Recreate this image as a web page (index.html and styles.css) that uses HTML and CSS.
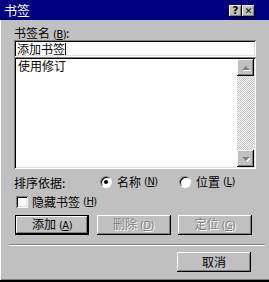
FILE: index.html
```html
<!DOCTYPE html>
<html>
<head>
  <meta charset="UTF-8">
  <title>书签</title>
  <link rel="stylesheet" href="styles.css">
</head>
<body>
  <div class="window">
    <div class="titlebar">
      <span class="title">书签</span>
      <span class="cap-btn">?</span>
      <span class="cap-btn close">✕</span>
    </div>

    <div class="content">
      <div class="label">书签名<span class="key">(<u>B</u>)</span>:</div>
      <div class="field">添加书签<span class="caret"></span></div>

      <div class="list">
        <div class="items">
          <div class="item">使用修订</div>
        </div>
        <div class="scroll">
          <div class="arrow"><i class="up"></i></div>
          <div class="track"></div>
          <div class="arrow"><i class="down"></i></div>
        </div>
      </div>

      <div class="sort">
        <span class="sort-label">排序依据:</span>
        <label class="radio r1"><span class="dot on"></span>名称<span class="key">(<u>N</u>)</span></label>
        <label class="radio r2"><span class="dot"></span>位置<span class="key">(<u>L</u>)</span></label>
      </div>

      <label class="check"><span class="box"></span>隐藏书签<span class="key">(<u>H</u>)</span></label>

      <div class="buttons">
        <button class="btn default">添加<span class="key">(<u>A</u>)</span></button>
        <button class="btn" disabled>删除<span class="key">(<u>D</u>)</span></button>
        <button class="btn" disabled>定位<span class="key">(<u>G</u>)</span></button>
      </div>

      <div class="sep"></div>

      <div class="footer">
        <button class="btn">取消</button>
      </div>
    </div>
  </div>
</body>
</html>
```

FILE: styles.css
```css
* {
  box-sizing: border-box;
}

body {
  margin: 0;
  background: #c0c0c0;
  font-family: "Noto Sans CJK SC", "DejaVu Sans", sans-serif;
  font-size: 12px;
  color: #000;
}

u {
  text-decoration: underline;
  text-underline-offset: 1px;
}

/* mnemonic like (B) - narrow, as in the old bitmap font */
.key {
  margin-left: 3px;
  font-family: "DejaVu Sans Condensed", "DejaVu Sans", sans-serif;
  font-size: 11px;
  letter-spacing: -0.5px;
}

.window {
  width: 269px;
  height: 282px;
  background: #c0c0c0;
  border-bottom: 2px solid #000;
  box-shadow: inset 1px 0 #fff, inset 0 -1px #808080;
}

.titlebar {
  display: flex;
  align-items: center;
  height: 20px;
  padding: 0 14px 0 4px;
  background: #000080;
  color: #fff;
}

.title {
  flex: 1;
  font-size: 13px;
  line-height: 14px;
}

.cap-btn {
  display: flex;
  align-items: center;
  justify-content: center;
  width: 13px;
  height: 12px;
  margin-top: 2px;
  background: #c0c0c0;
  color: #000;
  font-family: "DejaVu Sans", sans-serif;
  font-weight: bold;
  font-size: 10px;
  line-height: 1;
  box-shadow: inset -1px -1px #000, inset 1px 1px #fff, inset -2px -2px #808080;
}

.cap-btn.close {
  font-size: 9px;
}

.content {
  padding: 6px 13px 0 14px;
}

.label {
  height: 14px;
  line-height: 14px;
}

.field {
  display: flex;
  align-items: center;
  height: 17px;
  padding-left: 3px;
  background: #fff;
  line-height: 13px;
  box-shadow: inset 1px 1px #808080, inset -1px -1px #fff, inset 2px 2px #000, inset -2px -2px #dfdfdf;
}

.caret {
  display: inline-block;
  width: 1px;
  height: 12px;
  background: #000;
}

.list {
  display: flex;
  height: 112px;
  padding: 2px;
  background: #fff;
  box-shadow: inset 1px 1px #808080, inset -1px -1px #fff, inset 2px 2px #000, inset -2px -2px #dfdfdf;
}

.items {
  flex: 1;
  padding: 0 2px;
}

.item {
  line-height: 13px;
}

.scroll {
  display: flex;
  flex-direction: column;
  width: 17px;
}

.track {
  flex: 1;
  background: repeating-conic-gradient(#c0c0c0 0 25%, #fff 0 50%) 0 0 / 2px 2px;
}

.arrow {
  display: flex;
  align-items: center;
  justify-content: center;
  height: 17px;
  background: #c0c0c0;
  box-shadow: inset -1px -1px #000, inset 1px 1px #fff, inset -2px -2px #808080;
}

.arrow i {
  width: 0;
  height: 0;
  border-left: 4px solid transparent;
  border-right: 4px solid transparent;
  filter: drop-shadow(1px 1px 0 #fff);
}

.arrow .up {
  border-bottom: 4px solid #808080;
}

.arrow .down {
  border-top: 4px solid #808080;
}

.sort {
  display: flex;
  align-items: center;
  height: 14px;
  margin-top: 6px;
}

.sort-label {
  width: 86px;
}

.radio,
.check {
  display: flex;
  align-items: center;
  line-height: 14px;
}

.r1 {
  width: 79px;
}

.dot {
  position: relative;
  width: 12px;
  height: 12px;
  margin-right: 5px;
  border-radius: 50%;
  background: #fff;
  border: 1px solid;
  border-color: #808080 #fff #fff #808080;
  box-shadow: inset 1px 1px #000;
}

.dot.on::after {
  content: "";
  position: absolute;
  left: 3px;
  top: 3px;
  width: 4px;
  height: 4px;
  border-radius: 50%;
  background: #000;
}

.check {
  height: 13px;
  margin-top: 6px;
  padding-left: 2px;
}

.box {
  width: 12px;
  height: 12px;
  margin-right: 4px;
  background: #fff;
  box-shadow: inset 1px 1px #808080, inset -1px -1px #fff, inset 2px 2px #000, inset -2px -2px #dfdfdf;
}

.buttons {
  display: flex;
  justify-content: space-between;
  width: 237px;
  margin: 7px 0 0 1px;
}

.btn {
  width: 74px;
  height: 20px;
  padding: 0;
  border: 0;
  background: #c0c0c0;
  font: inherit;
  line-height: 14px;
  color: #000;
  box-shadow: inset -1px -1px #000, inset 1px 1px #fff, inset -2px -2px #808080;
}

.btn.default {
  box-shadow: inset 0 0 0 1px #000, inset -2px -2px #000, inset 2px 2px #fff, inset -3px -3px #808080;
}

.btn:disabled {
  color: #808080;
  text-shadow: 1px 1px 0 #fff;
}

.sep {
  height: 2px;
  margin: 9px -9px 0 -5px;
  border-top: 1px solid #808080;
  border-bottom: 1px solid #fff;
}

.footer {
  display: flex;
  justify-content: flex-end;
  margin: 6px 5px 0 0;
}
```
